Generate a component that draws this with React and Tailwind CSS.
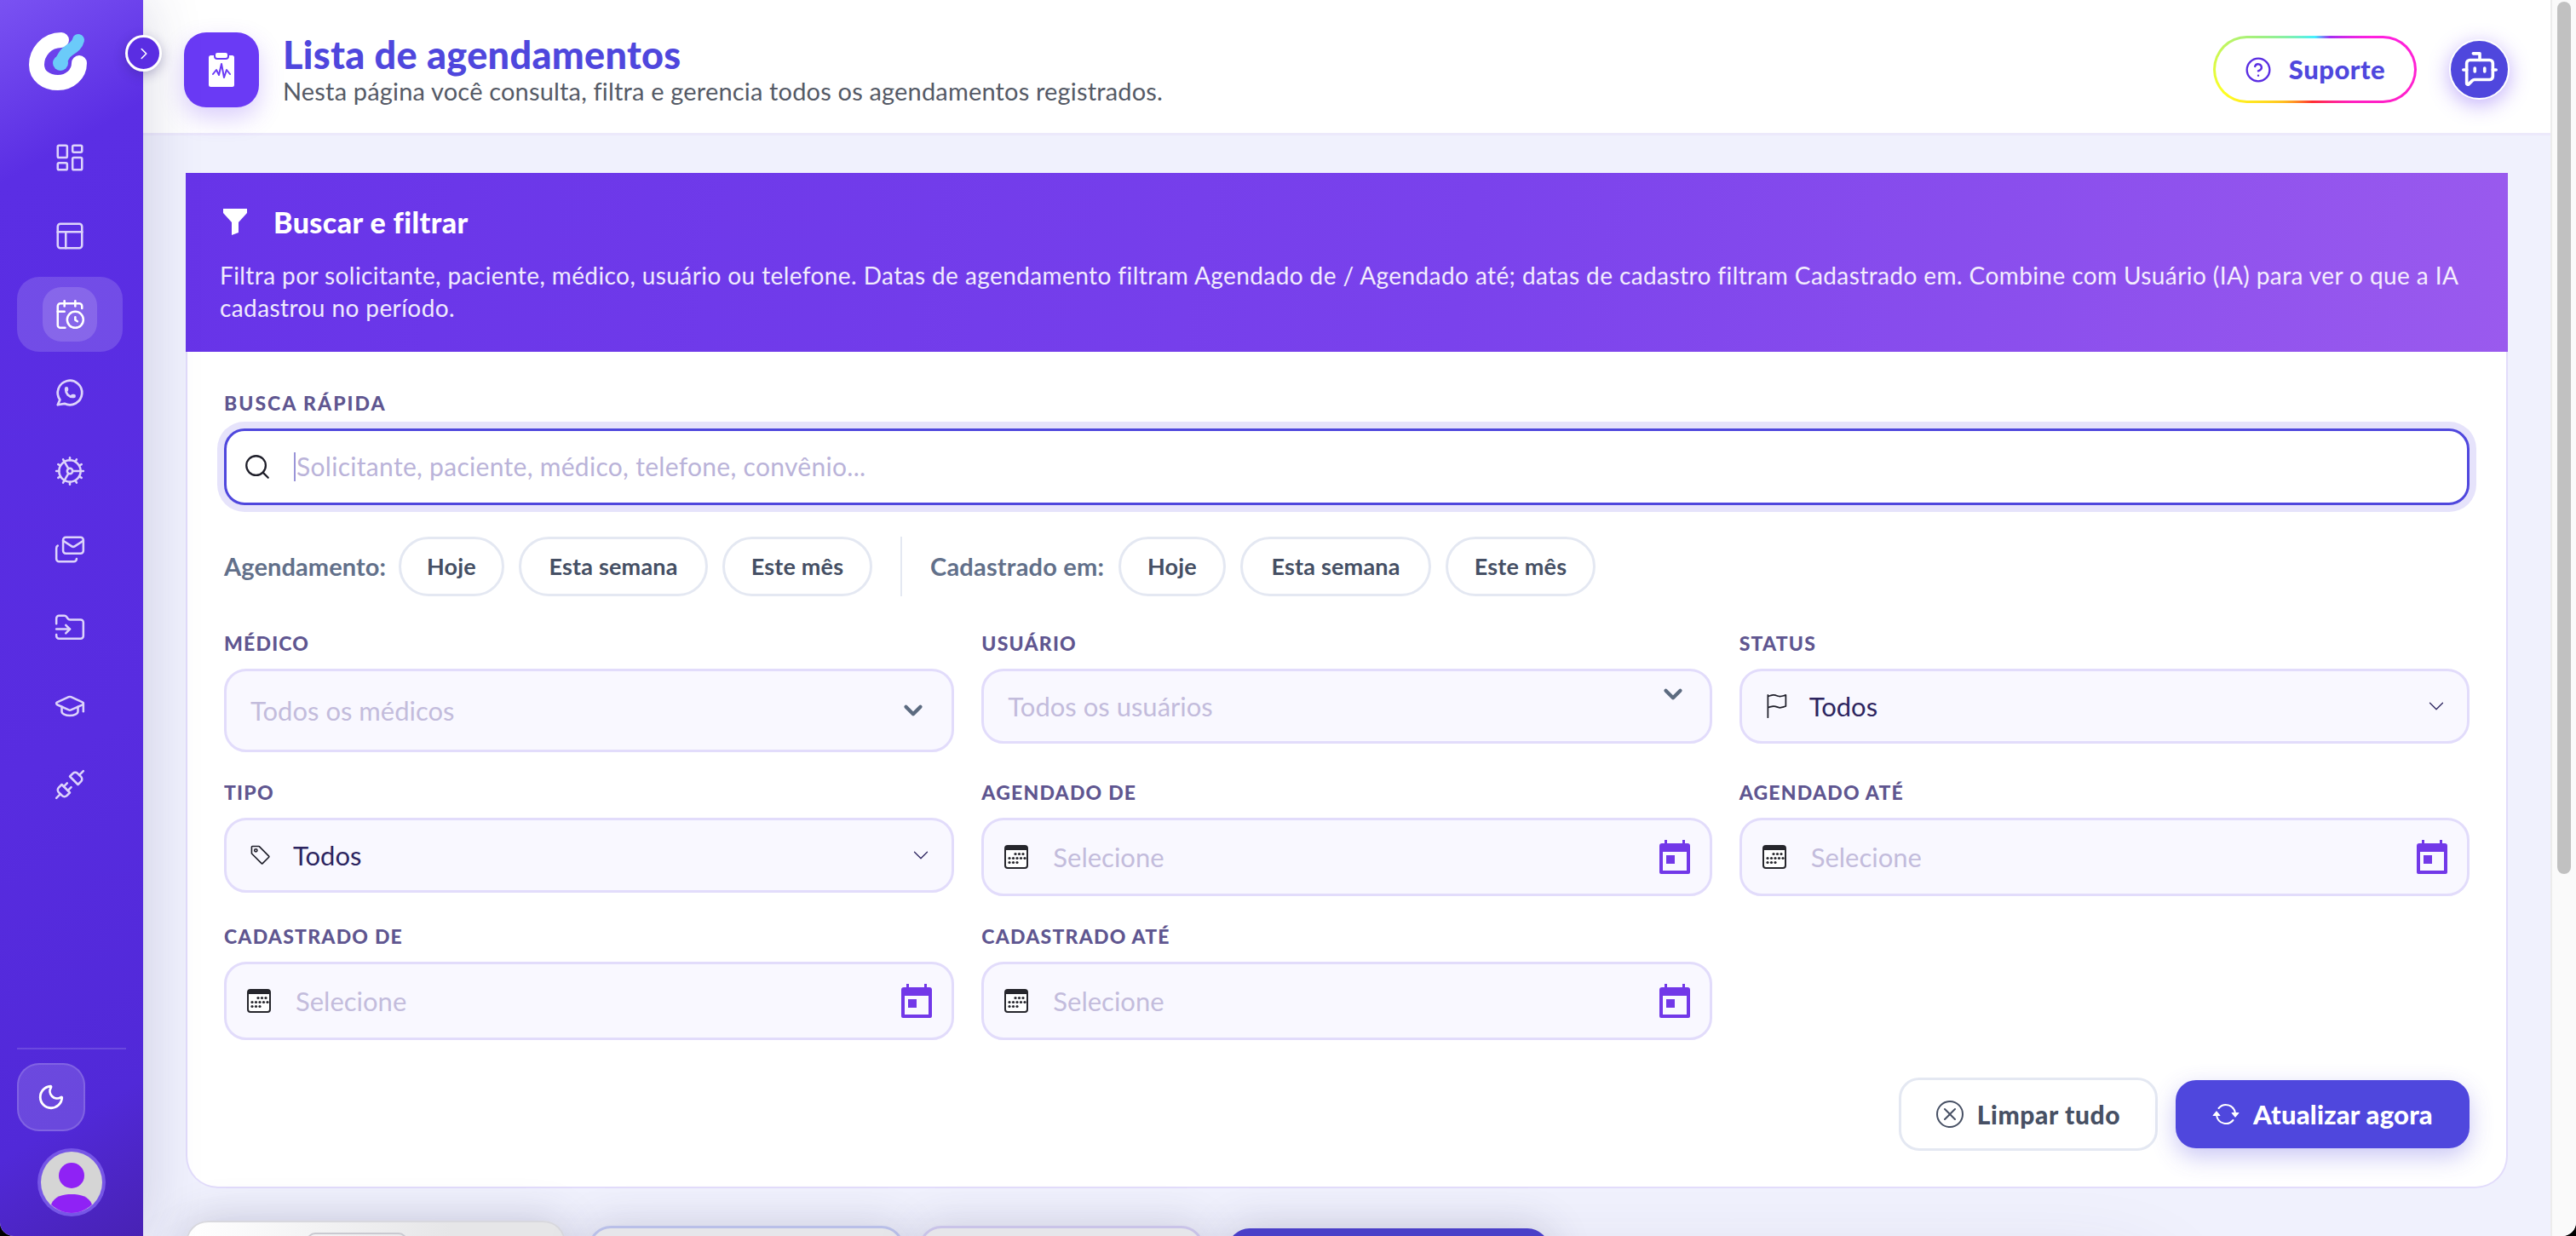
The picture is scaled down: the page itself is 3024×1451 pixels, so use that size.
import {
  LayoutDashboard, PanelsTopLeft, CalendarClock, Cog, Mails, FolderInput, GraduationCap, Unplug,
  Moon, ChevronRight, ChevronDown, CircleHelp, BotMessageSquare, Search,
} from 'lucide-react';
import { TbBrandWhatsapp } from 'react-icons/tb';
import { BsFlag, BsTag, BsChevronDown, BsXCircle, BsArrowRepeat } from 'react-icons/bs';

const navIcons = [LayoutDashboard, PanelsTopLeft, CalendarClock, TbBrandWhatsapp, Cog, Mails, FolderInput, GraduationCap, Unplug];

function Logo() {
  return (
    <svg width="68" height="68" viewBox="0 0 68 68" fill="none">
      <path d="M38 9C20 9 9 24 9 38C9 51 20 59 34 59C48 59 59 49 59 36" stroke="#fff" strokeWidth="18" strokeLinecap="round" />
      <path d="M58 9C56 18 46 20 42 26C40 29 38 32 37 35" stroke="#6bcbf9" strokeWidth="14" strokeLinecap="round" />
      <circle cx="37" cy="36" r="9" fill="#6bcbf9" />
    </svg>
  );
}

function ClipboardPulse() {
  return (
    <svg width="44" height="44" viewBox="0 0 44 44">
      <rect x="7" y="5" width="30" height="37" rx="2.5" fill="#fff" />
      <rect x="14" y="1" width="16" height="8" rx="3" fill="#fff" stroke="#6a3af5" strokeWidth="2" />
      <path d="M12 27L16 22L19 28L22 15L25 31L28 22L32 27" fill="none" stroke="#6a3af5" strokeWidth="2" strokeLinejoin="round" strokeLinecap="round" />
    </svg>
  );
}

function Funnel() {
  return (
    <svg width="30" height="32" viewBox="0 0 30 32">
      <path d="M1 1H29V6L19 17V29L11 32V17L1 6Z" fill="#fff" />
    </svg>
  );
}

function BlackCalendar() {
  return (
    <svg width="28" height="28" viewBox="0 0 28 28" className="shrink-0">
      <rect x="1" y="1" width="26" height="26" rx="3" fill="#fff" stroke="#26262c" strokeWidth="2" />
      <path d="M1 4a3 3 0 0 1 3-3h20a3 3 0 0 1 3 3v2H1Z" fill="#26262c" />
      {[[13, 10.5], [17.5, 10.5], [22, 10.5], [6, 15.5], [10.5, 15.5], [15, 15.5], [19.5, 15.5], [24, 15.5], [6, 20.5], [10.5, 20.5], [15, 20.5]].map(([cx, cy]) => (
        <circle key={`${cx}-${cy}`} cx={cx} cy={cy} r="1.6" fill="#26262c" />
      ))}
    </svg>
  );
}

function PurpleCalendar() {
  return (
    <svg width="36" height="40" viewBox="0 0 36 40" className="shrink-0">
      <path d="M6 0h3v4h18V0h3v4h3a3 3 0 0 1 3 3v31a2 2 0 0 1-2 2H2a2 2 0 0 1-2-2V7a3 3 0 0 1 3-3h3Z" fill="#7238e8" />
      <rect x="4" y="14" width="28" height="22" fill="#f9f8ff" />
      <rect x="8" y="18" width="10" height="10" fill="#7238e8" />
    </svg>
  );
}

function Avatar() {
  return (
    <div className="ml-[44px] flex h-[80px] w-[80px] items-center justify-center rounded-full bg-[#7656e6]">
      <svg width="72" height="72" viewBox="0 0 72 72">
        <circle cx="36" cy="36" r="36" fill="#d5d5d5" />
        <ellipse cx="36" cy="28" rx="15" ry="15" fill="#8f22f5" />
        <path d="M12 62C16 52 26 50 36 50C46 50 56 52 60 62C54 68 45 72 36 72C27 72 18 68 12 62Z" fill="#8f22f5" />
      </svg>
    </div>
  );
}

function Sidebar() {
  return (
    <aside className="relative z-10 flex h-full w-[168px] shrink-0 flex-col bg-[linear-gradient(150deg,#7a52f2_0%,#5b2ee4_14%,#582ce0_60%,#5129d8_88%,#4822b4_100%)] pt-[38px] pb-[23px] shadow-[0_0_70px_rgba(50,50,110,0.2)]">
      <div className="ml-[34px]"><Logo /></div>
      <button className="absolute top-[41px] left-[147px] z-20 flex h-[43px] w-[43px] items-center justify-center rounded-full border-[3px] border-white bg-[#5a2de2] text-white shadow-[0_4px_14px_rgba(40,30,110,0.3)]">
        <ChevronRight size={22} strokeWidth={1.75} />
      </button>
      <nav className="mt-[35px] flex flex-col gap-[4px]">
        {navIcons.map((Icon, i) => (
          <div key={i} className={`mx-[20px] flex h-[88px] w-[124px] items-center justify-center rounded-[26px] ${i === 2 ? 'bg-white/15 text-white' : 'text-[#ddd3fb]'}`}>
            <div className={`flex h-[64px] w-[64px] items-center justify-center rounded-[22px] ${i === 2 ? 'bg-white/15' : ''}`}>
              <Icon size={38} strokeWidth={i === 3 ? 1.75 : 1.6} />
            </div>
          </div>
        ))}
      </nav>
      <div className="mt-auto mx-[20px] h-[2px] w-[128px] bg-white/15" />
      <div className="mt-[16px] ml-[20px] flex h-[80px] w-[80px] items-center justify-center rounded-[26px] border-2 border-white/15 bg-white/15 text-white">
        <Moon size={34} strokeWidth={2} />
      </div>
      <div className="mt-[20px]"><Avatar /></div>
    </aside>
  );
}

function Header() {
  return (
    <header className="flex h-[159px] shrink-0 items-center border-b-[3px] border-[#ece9fb] bg-white pt-[7px] pr-[48px] pl-[48px]">
      <div className="flex h-[88px] w-[88px] items-center justify-center rounded-[26px] bg-[#6a3af5] shadow-[0_12px_28px_rgba(106,58,245,0.25)]">
        <ClipboardPulse />
      </div>
      <div className="ml-[28px]">
        <h1 className="text-[45px] leading-[50px] font-black tracking-[0.3px] text-[#4f47dd]">Lista de agendamentos</h1>
        <p className="text-[29px] leading-[36px] tracking-[0.17px] text-[#555a66]">Nesta página você consulta, filtra e gerencia todos os agendamentos registrados.</p>
      </div>
      <div className="ml-auto rounded-full bg-[conic-gradient(#44f0ff_0deg,#a030f0_25deg,#ff20e0_60deg,#ff20c0_130deg,#ff3030_185deg,#ffc020_225deg,#ffff20_255deg,#a0f080_300deg,#44f0ff_360deg)] p-[3px]">
        <div className="flex h-[73px] w-[233px] items-center justify-center gap-[20px] rounded-full bg-white">
          <CircleHelp size={32} strokeWidth={1.75} className="text-[#5a2de2]" />
          <span className="text-[31px] font-black tracking-[0.5px] text-[#4f47dd]">Suporte</span>
        </div>
      </div>
      <div className="ml-[38px] flex h-[71px] w-[71px] items-center justify-center rounded-full border-2 border-white bg-[#4f47dd] text-white shadow-[0_6px_24px_rgba(106,58,245,0.4)]">
        <BotMessageSquare size={46} strokeWidth={1.9} />
      </div>
    </header>
  );
}

function Pill({ label, w }) {
  return (
    <button className={`flex h-[70px] items-center justify-center rounded-full border-[3px] border-[#e4e8f2] bg-white text-[27px] font-bold tracking-[0.2px] text-[#454f64] ${w}`}>
      {label}
    </button>
  );
}

function Field({ label, children }) {
  return (
    <div className="min-w-0">
      <div className="h-[30px] text-[23px] leading-[30px] font-black tracking-[1.2px] text-[#5f5690]">{label}</div>
      <div className="mt-[15px]">{children}</div>
    </div>
  );
}

function Box({ h, children, className = '' }) {
  return (
    <div className={`flex items-center rounded-[26px] border-[3px] border-[#e2dcfb] bg-[#f9f8ff] text-[31px] ${h} ${className}`}>
      {children}
    </div>
  );
}

function DateField({ label }) {
  return (
    <Field label={label}>
      <Box h="h-[92px]" className="pr-[23px] pl-[24px]">
        <BlackCalendar />
        <span className="ml-[29px] text-[#c3bcdc]">Selecione</span>
        <span className="ml-auto"><PurpleCalendar /></span>
      </Box>
    </Field>
  );
}

function Filters() {
  return (
    <section className="rounded-b-[38px] border-x-2 border-b-2 border-[#e2dcfb] bg-white">
      <div className="-mx-[2px] h-[210px] bg-[linear-gradient(100deg,#6734e8_0%,#7a42ec_55%,#9a5aee_100%)] px-[40px] pt-[39px] text-white">
        <div className="flex h-[36px] items-center">
          <span className="ml-[3px]"><Funnel /></span>
          <span className="ml-[30px] text-[34px] font-black tracking-[0.4px]">Buscar e filtrar</span>
        </div>
        <p className="mt-[26px] text-[28px] leading-[38px] tracking-[0.41px] text-white/90">
          Filtra por solicitante, paciente, médico, usuário ou telefone. Datas de agendamento filtram Agendado de / Agendado até; datas de cadastro filtram Cadastrado em. Combine com Usuário (IA) para ver o que a IA cadastrou no período.
        </p>
      </div>
      <div className="px-[43px] pt-[45px] pb-[42px]">
        <div className="h-[30px] text-[23px] leading-[30px] font-black tracking-[2px] text-[#5f5690]">BUSCA RÁPIDA</div>
        <div className="mt-[15px] flex h-[90px] items-center rounded-[24px] border-[3px] border-[#4f47dd] bg-white pl-[19px] shadow-[0_0_0_8px_#e6e3fb]">
          <Search size={34} strokeWidth={1.6} className="shrink-0 text-[#1f1f2a]" />
          <span className="ml-[26px] h-[34px] w-[2px] shrink-0 bg-[#9a94d8]" />
          <input readOnly placeholder="Solicitante, paciente, médico, telefone, convênio..." className="ml-[1px] min-w-0 flex-1 bg-transparent pb-[2px] text-[30px] tracking-[0.3px] outline-none placeholder:text-[#bab3d9]" />
        </div>
        <div className="mt-[37px] flex items-center">
          <span className="w-[205px] text-[29px] font-bold tracking-[0.1px] text-[#62708a]">Agendamento:</span>
          <div className="flex gap-[17px]">
            <Pill label="Hoje" w="w-[124px]" />
            <Pill label="Esta semana" w="w-[222px]" />
            <Pill label="Este mês" w="w-[176px]" />
          </div>
          <span className="mx-[33px] h-[70px] w-[2px] bg-[#e4e8f2]" />
          <span className="w-[221px] text-[29px] font-bold tracking-[0.2px] text-[#62708a]">Cadastrado em:</span>
          <div className="flex gap-[17px]">
            <Pill label="Hoje" w="w-[126px]" />
            <Pill label="Esta semana" w="w-[224px]" />
            <Pill label="Este mês" w="w-[176px]" />
          </div>
        </div>
        <div className="mt-[40px] grid grid-cols-3 items-start gap-x-[32px] gap-y-[32px]">
          <Field label="MÉDICO">
            <Box h="h-[98px]" className="pr-[28px] pl-[28px]">
              <span className="text-[#c3bcdc]">Todos os médicos</span>
              <ChevronDown size={34} strokeWidth={3} className="ml-auto text-[#5c6b80]" />
            </Box>
          </Field>
          <Field label="USUÁRIO">
            <Box h="h-[88px]" className="pr-[26px] pl-[28px]">
              <span className="text-[#c3bcdc]">Todos os usuários</span>
              <ChevronDown size={34} strokeWidth={3} className="mb-[28px] ml-auto text-[#5c6b80]" />
            </Box>
          </Field>
          <Field label="STATUS">
            <Box h="h-[88px]" className="pr-[26px] pl-[26px]">
              <BsFlag size={28} className="text-[#1f1f2a]" />
              <span className="ml-[25px] text-[#2d2560]">Todos</span>
              <BsChevronDown size={20} className="ml-auto text-[#2d2560]" />
            </Box>
          </Field>
          <Field label="TIPO">
            <Box h="h-[88px]" className="pr-[26px] pl-[27px]">
              <BsTag size={26} className="text-[#1f1f2a]" />
              <span className="ml-[25px] text-[#2d2560]">Todos</span>
              <BsChevronDown size={20} className="ml-auto text-[#2d2560]" />
            </Box>
          </Field>
          <DateField label="AGENDADO DE" />
          <DateField label="AGENDADO ATÉ" />
          <DateField label="CADASTRADO DE" />
          <DateField label="CADASTRADO ATÉ" />
        </div>
        <div className="mt-[44px] flex items-center justify-end gap-[21px]">
          <button className="flex h-[86px] w-[304px] items-center justify-center gap-[16px] rounded-[24px] border-[3px] border-[#e4e8f2] bg-white text-[30px] font-black tracking-[0.6px] text-[#475064]">
            <BsXCircle size={32} /> Limpar tudo
          </button>
          <button className="flex h-[80px] w-[345px] items-center justify-center gap-[16px] rounded-[24px] bg-[#4f47dd] text-[31px] font-black tracking-[0.2px] text-white shadow-[0_10px_28px_rgba(79,71,221,0.3)]">
            <BsArrowRepeat size={32} /> Atualizar agora
          </button>
        </div>
      </div>
    </section>
  );
}

function Tabs() {
  return (
    <div className="mt-[38px] flex h-[60px] items-start">
      <div className="h-[80px] w-[446px] rounded-[26px] border-2 border-[#d8d8de] bg-[linear-gradient(90deg,#ffffff_0%,#e6e6e8_70%)] pt-[12px] pl-[140px] shadow-[0_0_50px_rgba(60,60,100,0.22)]">
        <div className="h-[40px] w-[118px] rounded-[10px] border-2 border-[#c9c9d0]" />
      </div>
      <div className="mt-[6px] ml-[27px] h-[70px] w-[370px] rounded-[26px] border-[3px] border-[#b9bfe8] bg-[#e6e6ea] shadow-[0_0_50px_rgba(60,60,100,0.18)]" />
      <div className="mt-[6px] ml-[18px] h-[70px] w-[334px] rounded-[26px] border-[3px] border-[#c9c3e8] bg-[#e6e6ea] shadow-[0_0_50px_rgba(60,60,100,0.18)]" />
      <div className="mt-[9px] ml-[28px] h-[70px] w-[378px] rounded-[26px] bg-[#4a3fc8] shadow-[0_0_50px_rgba(60,60,100,0.22)]" />
    </div>
  );
}

export default function App() {
  return (
    <div className="h-[1451px] w-[3024px] overflow-hidden bg-black font-['Lato',sans-serif]">
      <div className="flex h-full overflow-hidden rounded-b-[16px] bg-[#f0f1fd]">
        <Sidebar />
        <main className="flex min-w-0 flex-1 flex-col overflow-hidden bg-[#f0f1fd]">
          <Header />
          <div className="px-[50px] pt-[44px]">
            <Filters />
            <Tabs />
            <div className="mt-[20px] h-[300px] w-[2300px] rounded-[30px] bg-white shadow-[0_0_110px_rgba(60,60,100,0.25)]" />
          </div>
        </main>
        <div className="w-[30px] shrink-0 border-l-2 border-[#ececec] bg-[#fafafa] pt-[2px] pl-[6px]">
          <div className="h-[1024px] w-[16px] rounded-full bg-[#c1c1c1]" />
        </div>
      </div>
    </div>
  );
}
